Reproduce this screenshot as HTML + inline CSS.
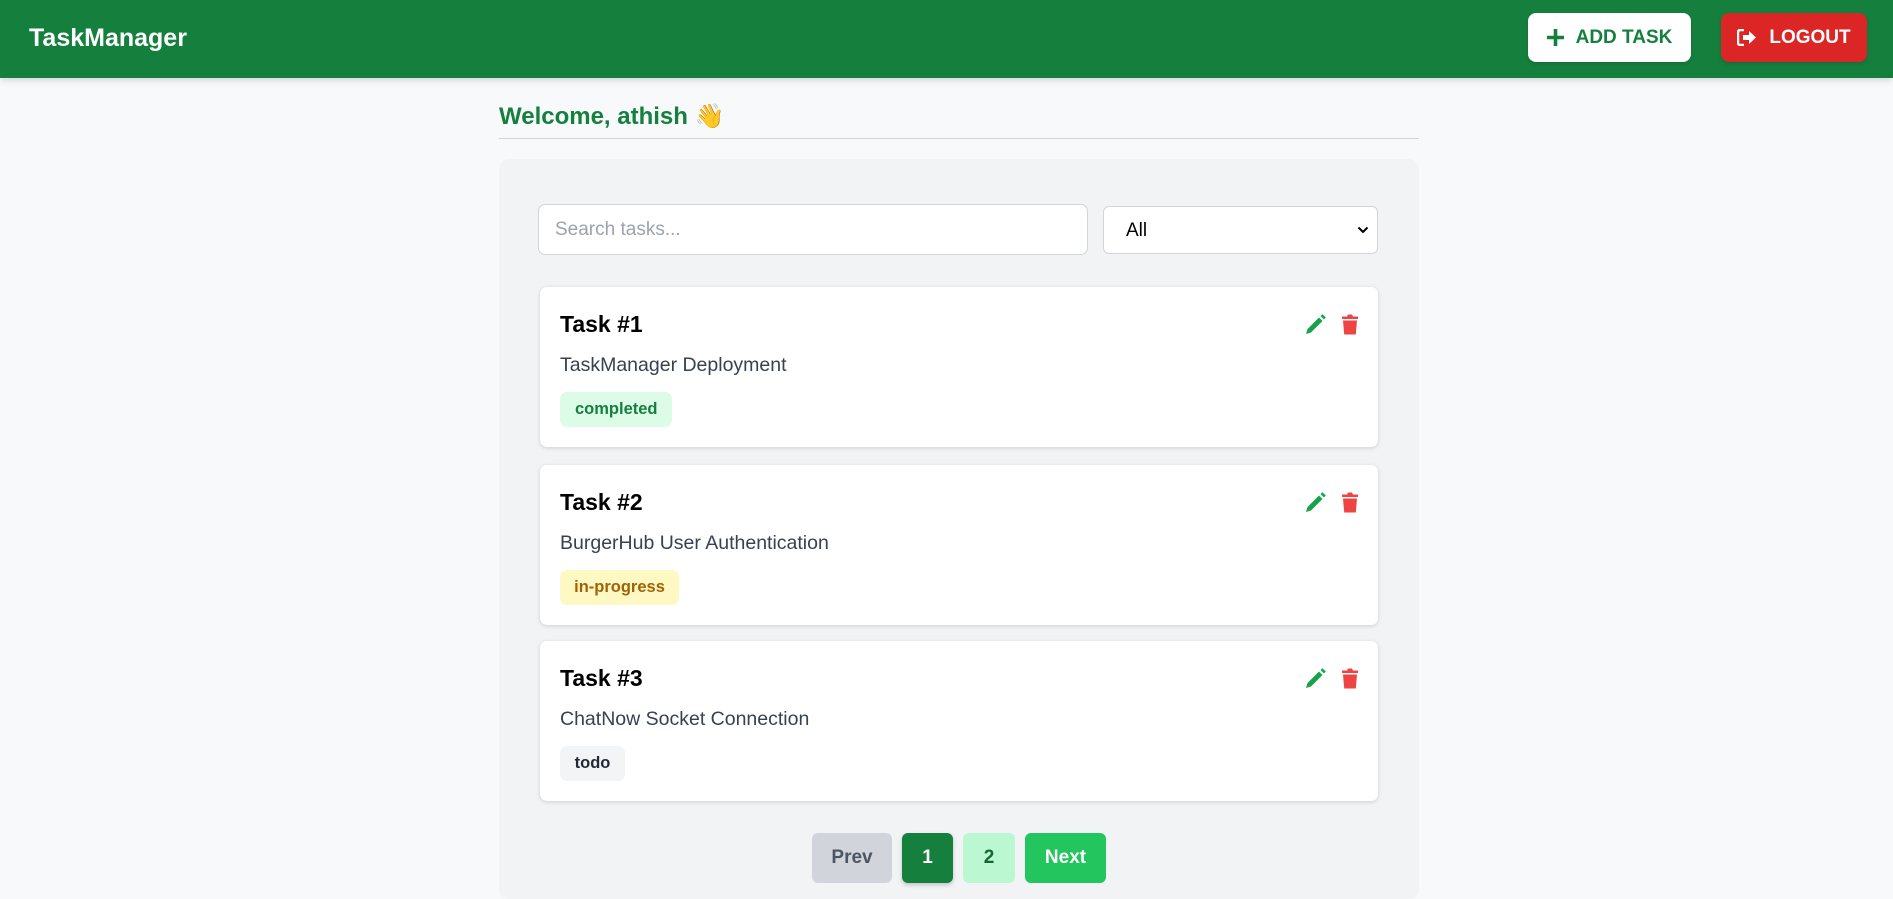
<!DOCTYPE html>
<html><head><meta charset="utf-8"><style>
*{box-sizing:border-box;margin:0;padding:0}
body{width:1893px;height:888px;overflow:hidden;background:#f8f9fb;font-family:"Liberation Sans",Arial,sans-serif;position:relative}
.hdr{position:absolute;left:0;top:0;width:1893px;height:78px;background:#15803d;box-shadow:0 3px 6px rgba(0,0,0,.12)}
.logo{position:absolute;left:29px;top:24px;color:#fff;font-size:25px;font-weight:bold}
.btn{position:absolute;top:13px;height:49px;border-radius:8px;font-weight:bold;font-size:19px;display:flex;align-items:center;justify-content:center;gap:12px;box-shadow:0 2px 5px rgba(0,0,0,.15)}
.add{left:1528px;width:163px;background:#fff;color:#15803d}
.out{left:1721px;width:146px;background:#dc2626;color:#fff}
.wel{position:absolute;left:499px;top:102px;color:#15803d;font-size:24px;font-weight:bold}
.line{position:absolute;left:499px;top:138px;width:920px;height:1px;background:#d1d5db}
.panel{position:absolute;left:499px;top:159px;width:920px;height:740px;background:#f2f3f5;border-radius:10px}
.search{position:absolute;left:538px;top:204px;width:550px;height:51px;background:#fff;border:1px solid #d1d5db;border-radius:7px;color:#9ca3af;font-size:19px;padding:14px 0 0 16px}
.sel{position:absolute;left:1103px;top:206px;width:275px;height:48px;background:#fff;border:1px solid #d1d5db;border-radius:6px;color:#000;font-size:19px;padding:13px 0 0 22px}
.sel svg{position:absolute;right:8px;top:19px}
.card{position:absolute;left:540px;width:838px;height:160px;background:#fff;border-radius:7px;box-shadow:0 1px 4px rgba(0,0,0,.15)}
.card h3{position:absolute;left:20px;top:24px;font-size:23px;font-weight:bold;color:#000}
.card p{position:absolute;left:20px;top:67px;font-size:19.5px;color:#374151}
.badge{position:absolute;left:20px;top:105px;height:35px;border-radius:7px;font-size:16.5px;font-weight:bold;padding:8px 15px 0;white-space:nowrap;text-align:center}
.ic1{position:absolute;left:765px;top:27px}
.ic2{position:absolute;left:801px;top:27px}
.pg{position:absolute;top:833px;height:50px;border-radius:6px;font-size:19px;font-weight:bold;display:flex;align-items:center;justify-content:center}
</style></head><body>
<div class="hdr"><div class="logo">TaskManager</div>
<div class="btn add"><svg width="17" height="17" viewBox="0 0 16 16"><path d="M6.3 0h3.4v6.3H16v3.4H9.7V16H6.3V9.7H0V6.3h6.3z" fill="#15803d"/></svg>ADD TASK</div>
<div class="btn out"><svg width="20" height="17" viewBox="0 0 20 17"><path d="M7 1H3a2 2 0 0 0-2 2v11a2 2 0 0 0 2 2h4" stroke="#fff" stroke-width="2.4" fill="none"/><path d="M6 6h6V2l7 6.5-7 6.5v-4H6z" fill="#fff"/></svg>LOGOUT</div>
</div>
<div class="wel">Welcome, athish <span style="font-family:'Noto Color Emoji',sans-serif;font-weight:normal">👋</span></div>
<div class="line"></div>
<div class="panel"></div>
<div class="search">Search tasks...</div>
<div class="sel">All<svg width="12" height="8" viewBox="0 0 12 8"><path d="M1.5 1.5l4.5 4.5 4.5-4.5" stroke="#000" stroke-width="2" fill="none"/></svg></div>

<div class="card" style="top:287px"><h3>Task #1</h3><p>TaskManager Deployment</p><div class="badge" style="background:#dcfce7;color:#15803d;width:112px">completed</div>
<svg class="ic1" width="22" height="21" viewBox="0 0 22 21"><path d="M1 20l1.5-5L14 3.5l3.5 3.5L6 18.5z M15.5 2l2-1.8 3.3 3.3L19 5.5z" fill="#16a34a"/></svg>
<svg class="ic2" width="18" height="21" viewBox="0 0 18 21"><path d="M1 2.5h5l1-2h4l1 2h5v2.5H1zM2 6.5h14l-1.2 14H3.2z" fill="#ef4444"/></svg></div>

<div class="card" style="top:465px"><h3>Task #2</h3><p>BurgerHub User Authentication</p><div class="badge" style="background:#fef9c3;color:#a16207;width:119px;padding:8px 0 0">in-progress</div>
<svg class="ic1" width="22" height="21" viewBox="0 0 22 21"><path d="M1 20l1.5-5L14 3.5l3.5 3.5L6 18.5z M15.5 2l2-1.8 3.3 3.3L19 5.5z" fill="#16a34a"/></svg>
<svg class="ic2" width="18" height="21" viewBox="0 0 18 21"><path d="M1 2.5h5l1-2h4l1 2h5v2.5H1zM2 6.5h14l-1.2 14H3.2z" fill="#ef4444"/></svg></div>

<div class="card" style="top:641px"><h3>Task #3</h3><p>ChatNow Socket Connection</p><div class="badge" style="background:#f3f4f6;color:#1f2937;width:65px;padding:8px 0 0">todo</div>
<svg class="ic1" width="22" height="21" viewBox="0 0 22 21"><path d="M1 20l1.5-5L14 3.5l3.5 3.5L6 18.5z M15.5 2l2-1.8 3.3 3.3L19 5.5z" fill="#16a34a"/></svg>
<svg class="ic2" width="18" height="21" viewBox="0 0 18 21"><path d="M1 2.5h5l1-2h4l1 2h5v2.5H1zM2 6.5h14l-1.2 14H3.2z" fill="#ef4444"/></svg></div>

<div class="pg" style="left:812px;width:80px;background:#d1d5db;color:#4b5563">Prev</div>
<div class="pg" style="left:902px;width:51px;background:#15803d;color:#fff;box-shadow:0 2px 4px rgba(0,0,0,.2)">1</div>
<div class="pg" style="left:963px;width:52px;background:#bbf7d0;color:#166534">2</div>
<div class="pg" style="left:1025px;width:81px;background:#22c55e;color:#fff">Next</div>
</body></html>
